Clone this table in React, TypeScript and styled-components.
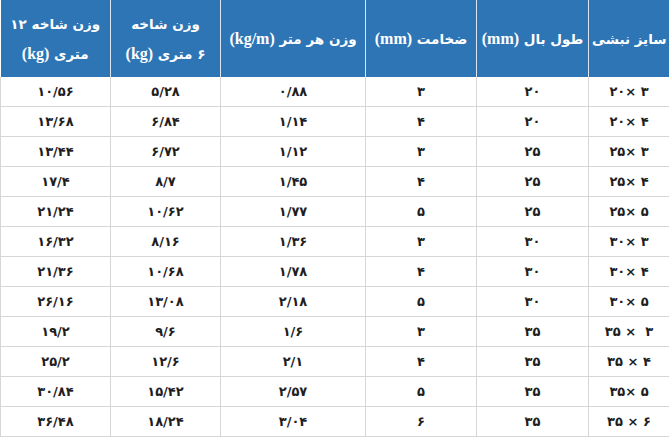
import React from "react";
import styled, { createGlobalStyle } from "styled-components";

const GlobalStyle = createGlobalStyle`
  html, body {
    margin: 0;
    padding: 0;
    background: #ffffff;
  }
`;

const Table = styled.table`
  width: 669px;
  table-layout: fixed;
  border-collapse: collapse;
  direction: rtl;
  font-family: "DejaVu Sans", sans-serif;
`;

const HeadCell = styled.th`
  height: 77px;
  padding: 0;
  background: #2e75b6;
  color: #ffffff;
  font-size: 13.5px;
  font-weight: bold;
  line-height: 30px;
  white-space: nowrap;
  text-align: center;
  vertical-align: middle;
  border-left: 1px solid #dce6f1;
  &:last-child {
    border-left: none;
  }
`;

const Unit = styled.span`
  font-family: "Liberation Serif", "Times New Roman", serif;
  font-size: 16px;
  font-weight: 700;
  unicode-bidi: isolate;
`;

const Cell = styled.td`
  height: 29px;
  padding: 0;
  font-size: 13px;
  font-weight: bold;
  color: #1e1e1e;
  text-align: center;
  vertical-align: middle;
  border: 1px solid #d6d6d6;
  border-top: none;
  &:first-child {
    border-right: 1px solid #d6d6d6;
  }
`;

const SizeText = styled.span`
  white-space: pre;
`;

const widths = [81, 112, 111, 145, 110, 110];

type Row = [string, string, string, string, string, string];

const rows: Row[] = [
  ["۳ ×۲۰", "۲۰", "۳", "۰/۸۸", "۵/۲۸", "۱۰/۵۶"],
  ["۴ ×۲۰", "۲۰", "۴", "۱/۱۴", "۶/۸۴", "۱۳/۶۸"],
  ["۳ ×۲۵", "۲۵", "۳", "۱/۱۲", "۶/۷۲", "۱۳/۴۴"],
  ["۴ ×۲۵", "۲۵", "۴", "۱/۴۵", "۸/۷", "۱۷/۴"],
  ["۵ ×۲۵", "۲۵", "۵", "۱/۷۷", "۱۰/۶۲", "۲۱/۲۴"],
  ["۳ ×۳۰", "۳۰", "۳", "۱/۳۶", "۸/۱۶", "۱۶/۳۲"],
  ["۴ ×۳۰", "۳۰", "۴", "۱/۷۸", "۱۰/۶۸", "۲۱/۳۶"],
  ["۵ ×۳۰", "۳۰", "۵", "۲/۱۸", "۱۳/۰۸", "۲۶/۱۶"],
  ["۳  × ۳۵", "۳۵", "۳", "۱/۶", "۹/۶", "۱۹/۲"],
  ["۴ × ۳۵", "۳۵", "۴", "۲/۱", "۱۲/۶", "۲۵/۲"],
  ["۵ ×۳۵", "۳۵", "۵", "۲/۵۷", "۱۵/۴۲", "۳۰/۸۴"],
  ["۶ × ۳۵", "۳۵", "۶", "۳/۰۴", "۱۸/۲۴", "۳۶/۴۸"],
];

const App: React.FC = () => {
  return (
    <>
      <GlobalStyle />
      <Table>
        <colgroup>
          {widths.map((w, i) => (
            <col key={i} style={{ width: w }} />
          ))}
        </colgroup>
        <thead>
          <tr>
            <HeadCell>سایز نبشی</HeadCell>
            <HeadCell>
              طول بال <Unit>(mm)</Unit>
            </HeadCell>
            <HeadCell>
              ضخامت <Unit>(mm)</Unit>
            </HeadCell>
            <HeadCell>
              وزن هر متر <Unit>(kg/m)</Unit>
            </HeadCell>
            <HeadCell>
              وزن شاخه
              <br />۶ متری <Unit>(kg)</Unit>
            </HeadCell>
            <HeadCell>
              وزن شاخه ۱۲
              <br />
              متری <Unit>(kg)</Unit>
            </HeadCell>
          </tr>
        </thead>
        <tbody>
          {rows.map((r, i) => (
            <tr key={i}>
              <Cell>
                <SizeText>{r[0]}</SizeText>
              </Cell>
              {r.slice(1).map((v, j) => (
                <Cell key={j}>{v}</Cell>
              ))}
            </tr>
          ))}
        </tbody>
      </Table>
    </>
  );
};

export default App;
